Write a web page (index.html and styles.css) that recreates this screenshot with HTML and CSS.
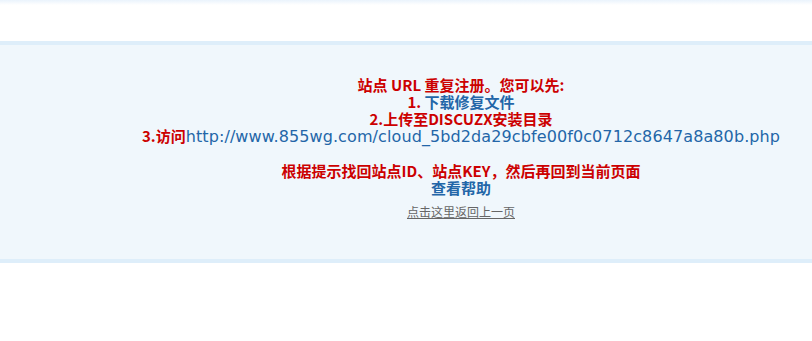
FILE: index.html
```html
<!DOCTYPE html>
<html lang="zh-CN">
<head>
<meta charset="utf-8">
<title>提示信息</title>
<link rel="stylesheet" href="styles.css">
</head>
<body>
<div class="topbar"></div>
<div class="box">
  <div class="msg">
    <p class="line red">站点 URL 重复注册。您可以先:</p>
    <p class="line red">1. <a class="link" href="#">下载修复文件</a></p>
    <p class="line red">2.上传至DISCUZX安装目录</p>
    <p class="line red">3.访问<a class="url" href="#">http://www.855wg.com/cloud_5bd2da29cbfe00f0c0712c8647a8a80b.php</a></p>
    <p class="line">&nbsp;</p>
    <p class="line red">根据提示找回站点ID、站点KEY，然后再回到当前页面</p>
    <p class="line"><a class="link" href="#">查看帮助</a></p>
    <p class="back"><a href="#">点击这里返回上一页</a></p>
  </div>
</div>
</body>
</html>
```

FILE: styles.css
```css
html, body {
  margin: 0;
  padding: 0;
  background: #fff;
}
body {
  font-family: "Noto Sans CJK SC", "DejaVu Sans", sans-serif;
  width: 812px;
  height: 341px;
  overflow: hidden;
}
.topbar {
  height: 41px;
  background: linear-gradient(to bottom, #eaf3fc 0, #ffffff 5px, #ffffff 100%);
}
.box {
  border-top: 4px solid #deeefa;
  border-bottom: 4px solid #deeefa;
  background: #f0f7fc;
  height: 214px;
  box-sizing: content-box;
}
.msg {
  padding: 31px 0 0 110px;
  text-align: center;
}
.line {
  margin: 0;
  font-size: 15px;
  font-weight: bold;
  line-height: 17px;
  white-space: nowrap;
}
.red {
  color: #cc0000;
}
.link {
  color: #2366a8;
  text-decoration: none;
}
.url {
  color: #2366a8;
  text-decoration: none;
  font-family: "DejaVu Sans", sans-serif;
  font-weight: normal;
  font-size: 16px;
  letter-spacing: 0.1px;
}
.back {
  margin: 8px 0 0;
  font-size: 12px;
  line-height: 16px;
}
.back a {
  color: #666;
  text-decoration: underline;
}
```
